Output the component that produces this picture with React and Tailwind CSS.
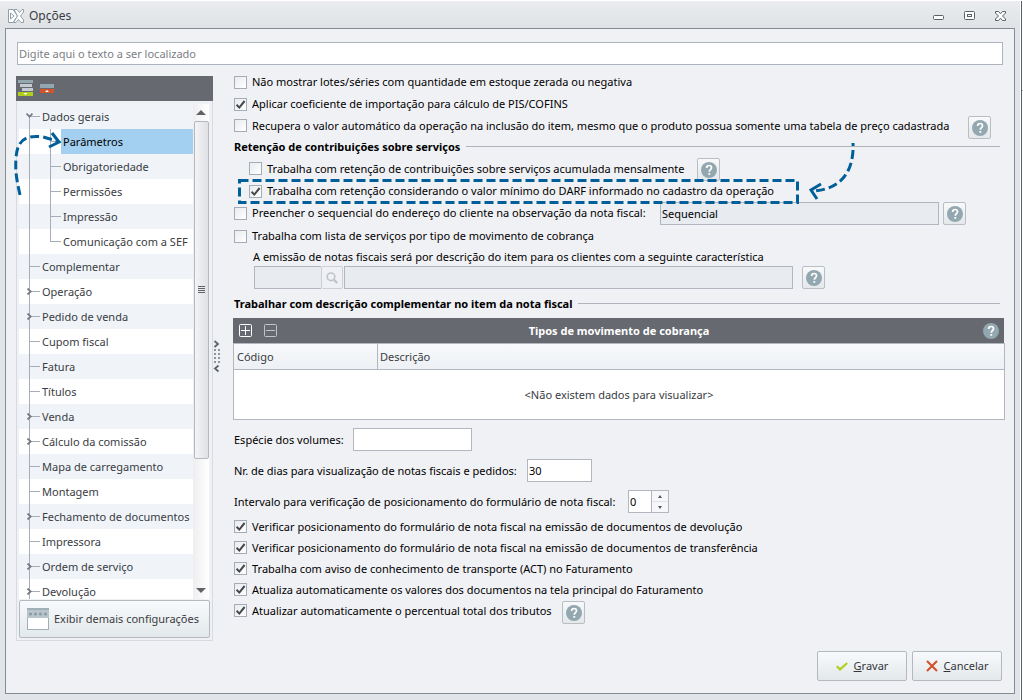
import React from 'react';

const TREE = [
  { name: 'Dados gerais', open: true },
  { name: 'Parâmetros', child: true, active: true },
  { name: 'Obrigatoriedade', child: true },
  { name: 'Permissões', child: true },
  { name: 'Impressão', child: true },
  { name: 'Comunicação com a SEF', child: true, last: true },
  { name: 'Complementar' },
  { name: 'Operação', more: true },
  { name: 'Pedido de venda', more: true },
  { name: 'Cupom fiscal' },
  { name: 'Fatura' },
  { name: 'Títulos' },
  { name: 'Venda', more: true },
  { name: 'Cálculo da comissão', more: true },
  { name: 'Mapa de carregamento' },
  { name: 'Montagem' },
  { name: 'Fechamento de documentos', more: true },
  { name: 'Impressora' },
  { name: 'Ordem de serviço', more: true },
  { name: 'Devolução', more: true },
];

const FINAL_CHECKS = [
  'Verificar posicionamento do formulário de nota fiscal na emissão de documentos de devolução',
  'Verificar posicionamento do formulário de nota fiscal na emissão de documentos de transferência',
  'Trabalha com aviso de conhecimento de transporte (ACT) no Faturamento',
  'Atualiza automaticamente os valores dos documentos na tela principal do Faturamento',
];

const Check = ({ label, checked, className = 'h-[22px]' }) => (
  <label className={`flex items-center gap-[5px] ${className}`}>
    <span className="grid size-[13px] shrink-0">
      <input
        type="checkbox"
        defaultChecked={checked}
        className="peer col-start-1 row-start-1 size-[13px] appearance-none border border-[#a4acb8] bg-linear-to-br from-[#e9ebee] to-white"
      />
      <svg
        viewBox="0 0 13 13"
        className="pointer-events-none invisible col-start-1 row-start-1 size-[13px] peer-checked:visible"
      >
        <path d="M2.6 6.8 5.3 9.6 10.6 3" fill="none" stroke="#45474c" strokeWidth="2" />
      </svg>
    </span>
    <span>{label}</span>
  </label>
);

const HelpMark = () => (
  <svg viewBox="0 0 16 16" className="size-4">
    <circle cx="8" cy="8" r="8" fill="#93a7b0" />
    <path d="M5.6 6.1C5.6 4.4 6.6 3.5 8.1 3.5s2.4.9 2.4 2.2c0 1.8-2.2 1.9-2.2 4" fill="none" stroke="#fff" strokeWidth="1.7" />
    <rect x="7.4" y="11" width="1.8" height="1.8" fill="#fff" />
  </svg>
);

const HelpButton = ({ className = '' }) => (
  <button
    type="button"
    aria-label="Ajuda"
    className={`mt-px flex size-[23px] shrink-0 items-center justify-center rounded-xs border border-[#b9bec5] bg-linear-to-b from-[#f8f9fb] to-[#e4e8eb] ${className}`}
  >
    <HelpMark />
  </button>
);

const Heading = ({ children, className = '' }) => (
  <div className={`flex items-center gap-[6px] ${className}`}>
    <h2 className="font-bold">{children}</h2>
    <span className="mr-[5px] h-px flex-1 bg-[#b0b5bd]" />
  </div>
);

const TreeRow = ({ item }) => (
  <li className="h-[25px] odd:bg-[#f0f4f9] even:bg-white">
    <button type="button" className="flex h-full w-full items-center overflow-hidden pl-[10px] text-left">
      <span
        className={`relative flex border-l border-[#a6acb8] ${
          item.open ? 'h-[13px] items-start self-end' : 'h-full items-center'
        } ${item.child ? 'w-[21px]' : 'w-[11px]'}`}
      >
        {!item.child && <span className="h-px w-[10px] bg-[#a6acb8]" />}
        {(item.more || item.open) && (
          <svg
            viewBox="0 0 7 7"
            className={`absolute -left-1 size-[7px] ${item.open ? '-top-1 rotate-90' : ''}`}
          >
            <path d="M1.5.5 4.7 3.5 1.5 6.5" fill="none" stroke="#777b85" strokeWidth="1.8" />
          </svg>
        )}
      </span>
      {item.child && (
        <span className="h-full w-[11px] shrink-0">
          <span className="block h-[13px] border-b border-l border-[#a6acb8]" />
          {!item.last && <span className="block h-3 border-l border-[#a6acb8]" />}
        </span>
      )}
      <span
        className={`flex h-full min-w-0 flex-1 items-center pl-[2px] whitespace-nowrap ${
          item.active ? 'bg-[#a3d0f0] text-black' : ''
        }`}
      >
        {item.name}
      </span>
    </button>
  </li>
);

const Sidebar = () => (
  <aside className="mt-[5px] flex w-[197px] shrink-0 flex-col text-[#3a3c42]">
    <div className="flex h-[25px] items-start gap-[7px] bg-[#666970] pt-1 pl-[2px]">
      <button type="button" aria-label="Expandir tudo">
        <svg viewBox="0 0 15 16" className="h-4 w-[15px]">
          <rect width="15" height="3" fill="#93a7b0" />
          <rect x="2" y="4" width="12" height="3" fill="#c5ccd1" />
          <rect x="4" y="8" width="11" height="3" fill="#c5ccd1" />
          <rect y="12" width="15" height="4" fill="#b0cf1c" />
          <path d="M5.5 13h4l-2 2z" fill="#fff" />
        </svg>
      </button>
      <button type="button" aria-label="Recolher tudo" className="mt-1">
        <svg viewBox="0 0 14 9" className="h-[9px] w-[14px]">
          <rect width="14" height="4" fill="#93a7b0" />
          <rect y="5" width="14" height="4" fill="#d2542b" />
          <path d="M5 8h4L7 6z" fill="#fff" />
        </svg>
      </button>
    </div>
    <div className="flex flex-1 flex-col border border-t-0 border-[#d6dbe2] px-[2px] pt-[3px] pb-[2px]">
      <div className="flex min-h-[200px] flex-1 basis-0 overflow-hidden pr-px">
        <ul className="min-w-0 flex-1">
          {TREE.map((item) => (
            <TreeRow key={item.name} item={item} />
          ))}
        </ul>
        <div className="flex w-4 flex-col items-center bg-linear-to-r from-[#eeeef0] to-white">
          <svg viewBox="0 0 10 17" className="h-[17px] w-[10px] shrink-0">
            <path d="M0 11h10L5 6z" fill="#606267" />
          </svg>
          <div className="flex w-[15px] flex-[338] flex-col items-center justify-center gap-px rounded-xs border border-[#b4b8be] bg-linear-to-r from-[#f4f4f6] to-[#dfe1e5]">
            <span className="h-px w-[7px] bg-[#606267]" />
            <span className="h-px w-[7px] bg-[#606267]" />
            <span className="h-px w-[7px] bg-[#606267]" />
            <span className="h-px w-[7px] bg-[#606267]" />
          </div>
          <div className="flex-[124]" />
          <svg viewBox="0 0 10 17" className="h-[17px] w-[10px] shrink-0">
            <path d="M0 6h10L5 11z" fill="#606267" />
          </svg>
        </div>
      </div>
      <button
        type="button"
        className="mt-px flex h-[38px] items-center gap-[5px] rounded-xs border border-[#b4b9c0] bg-linear-to-b from-[#f8fafc] to-[#e3e8eb] pl-[7px] whitespace-nowrap"
      >
        <svg viewBox="0 0 22 22" className="size-[22px]">
          <rect x=".5" y=".5" width="21" height="21" fill="#fff" stroke="#9fb0b8" />
          <rect width="22" height="10" fill="#b9c5cb" />
          <rect width="22" height="2" fill="#9fb0b8" />
          {[4, 9, 14, 19].map((x) => (
            <circle key={x} cx={x - 0.5} cy="6" r="1.6" fill="#8b9da6" />
          ))}
        </svg>
        Exibir demais configurações
      </button>
    </div>
  </aside>
);

const Splitter = () => (
  <div className="flex w-2 shrink-0 items-center justify-center">
    <svg viewBox="0 0 8 34" className="h-[34px] w-2">
      <path d="M1.5 2 5 5l-3.5 3M5.5 26.500 2 29.500l3.500 3" fill="none" stroke="#5f636b" strokeWidth="1.8" />
      {[10, 14, 18, 22].map((y) => (
        <g key={y} fill="#8f95a0">
          <rect x="1" y={y} width="2" height="2" />
          <rect x="5" y={y} width="2" height="2" />
        </g>
      ))}
    </svg>
  </div>
);

const ChargeTable = () => (
  <section className="mt-1">
    <div className="mr-px flex h-[25px] items-center bg-[#666970] pr-[5px] pl-[6px] text-white">
      <div className="flex flex-1 gap-3">
        <button type="button" aria-label="Adicionar">
          <svg viewBox="0 0 13 13" className="size-[13px]" fill="none" stroke="#fff">
            <rect x=".5" y=".5" width="12" height="12" rx="1" />
            <path d="M2 6.5h9M6.5 2v9" />
          </svg>
        </button>
        <button type="button" aria-label="Remover">
          <svg viewBox="0 0 13 13" className="size-[13px]" fill="none" stroke="#c2c4c8">
            <rect x=".5" y=".5" width="12" height="12" rx="1" />
            <path d="M2 6.5h9" />
          </svg>
        </button>
      </div>
      <h3 className="font-bold">Tipos de movimento de cobrança</h3>
      <div className="flex flex-1 justify-end">
        <button type="button" aria-label="Ajuda">
          <HelpMark />
        </button>
      </div>
    </div>
    <table className="w-full border-separate border-spacing-0 border border-[#b2b7bf] bg-white text-[#3a3c42]">
      <thead>
        <tr className="h-[26px] bg-linear-to-b from-[#f7f9fb] to-[#edf0f4] text-left">
          <th className="w-[144px] border-r border-b border-[#b2b7bf] pl-[3px] font-normal">Código</th>
          <th className="border-b border-[#b2b7bf] pl-[2px] font-normal">Descrição</th>
        </tr>
      </thead>
      <tbody>
        <tr className="h-[49px]">
          <td colSpan={2} className="text-center">
            &lt;Não existem dados para visualizar&gt;
          </td>
        </tr>
      </tbody>
    </table>
  </section>
);

const Settings = () => (
  <main className="min-w-0 flex-1 pl-3 text-black">
    <div className="pl-px">
      <Check label="Não mostrar lotes/séries com quantidade em estoque zerada ou negativa" />
      <Check label="Aplicar coeficiente de importação para cálculo de PIS/COFINS" checked />
      <div className="flex h-[21px] items-start">
        <Check
          className="h-[21px] w-[734px]"
          label="Recupera o valor automático da operação na inclusão do item, mesmo que o produto possua somente uma tabela de preço cadastrada"
        />
        <HelpButton />
      </div>

      <Heading className="h-[21px]">Retenção de contribuições sobre serviços</Heading>
      <div className="flex h-[22px] items-start pl-[15px]">
        <Check className="h-[23px] w-[448px]" label="Trabalha com retenção de contribuições sobre serviços acumulada mensalmente" />
        <HelpButton />
      </div>
      <div className="relative h-[22px] pl-[15px]">
        <Check
          checked
          className="h-6 w-[540px]"
          label="Trabalha com retenção considerando o valor mínimo do DARF informado no cadastro da operação"
        />
        <svg className="pointer-events-none absolute top-0 left-1 h-[25px] w-[561px]" fill="none">
          <rect x="1.5" y="1.5" width="558" height="22" stroke="#005f98" strokeWidth="3" strokeDasharray="9 4" />
        </svg>
        {/* callout arrow pointing at the highlighted option */}
        <svg
          viewBox="0 0 50 60"
          className="pointer-events-none absolute -top-9 left-[573px] h-[60px] w-[50px]"
          fill="none"
          stroke="#005f98"
          strokeWidth="3"
        >
          <path d="M46 0C47 21 40 46 6 48" strokeDasharray="9 4" strokeDashoffset="6" />
          <path d="M14 41 4 47 10 56" />
        </svg>
      </div>

      <div className="flex h-[23px] items-start">
        <Check className="h-6 w-[426px]" label="Preencher o sequencial do endereço do cliente na observação da nota fiscal:" />
        <input
          type="text"
          aria-label="Sequencial do endereço"
          defaultValue="Sequencial"
          className="mt-px h-[23px] w-[279px] border border-[#b2b7bf] bg-[#e8ebf0] px-px"
        />
        <HelpButton className="ml-1" />
      </div>
      <Check className="h-6" label="Trabalha com lista de serviços por tipo de movimento de cobrança" />
      <p className="h-[17px] pl-[19px] leading-[17px]">
        A emissão de notas fiscais será por descrição do item para os clientes com a seguinte característica
      </p>
      <div className="flex items-start pl-5">
        <input type="text" aria-label="Código da característica" disabled className="mt-px h-[23px] w-[67px] border border-r-0 border-[#b2b7bf] bg-[#e8ebf0]" />
        <button
          type="button"
          aria-label="Pesquisar"
          disabled
          className="mt-px mr-px flex h-[23px] w-[22px] items-center justify-center rounded-xs border border-[#ccd0d6] bg-[#eff1f4]"
        >
          <svg viewBox="0 0 12 12" className="size-3" fill="none" stroke="#bfc4ca">
            <circle cx="5" cy="4.8" r="3.8" strokeWidth="1.6" />
            <path d="M7.8 7.6 11.2 11" strokeWidth="2.2" />
          </svg>
        </button>
        <input type="text" aria-label="Característica" disabled className="mt-px h-[23px] w-[449px] border border-[#b2b7bf] bg-[#e8ebf0]" />
        <HelpButton className="ml-[9px]" />
      </div>

      <Heading className="mt-1 h-[21px]">Trabalhar com descrição complementar no item da nota fiscal</Heading>
    </div>

    <ChargeTable />

    <div className="pt-2 pl-px">
      <div className="flex h-[23px] items-center">
        <label htmlFor="especie" className="w-[119px]">Espécie dos volumes:</label>
        <input id="especie" type="text" className="h-[23px] w-[119px] border border-[#b2b7bf] bg-white px-px" />
      </div>
      <div className="mt-2 flex h-[23px] items-center">
        <label htmlFor="dias" className="w-[293px]">Nr. de dias para visualização de notas fiscais e pedidos:</label>
        <input id="dias" type="text" defaultValue="30" className="h-[23px] w-[65px] border border-[#b2b7bf] bg-white px-px" />
      </div>
      <div className="mt-2 flex h-[23px] items-center">
        <label htmlFor="intervalo" className="w-[394px]">
          Intervalo para verificação de posicionamento do formulário de nota fiscal:
        </label>
        <input id="intervalo" type="text" defaultValue="0" className="h-[23px] w-6 border border-[#b2b7bf] bg-white px-px" />
        <div className="flex h-[23px] w-[17px] flex-col border border-l-0 border-[#b2b7bf] bg-[#f6f7f9]">
          <button type="button" aria-label="Aumentar" className="flex flex-1 items-center justify-center border-b border-[#dfe2e6]">
            <svg viewBox="0 0 4 3" className="h-[3px] w-1"><path d="M0 3h4L2 0z" fill="#55585e" /></svg>
          </button>
          <button type="button" aria-label="Diminuir" className="flex flex-1 items-center justify-center">
            <svg viewBox="0 0 4 3" className="h-[3px] w-1"><path d="M0 0h4L2 3z" fill="#55585e" /></svg>
          </button>
        </div>
      </div>
      <div className="mt-[3px]">
        {FINAL_CHECKS.map((label) => (
          <Check key={label} label={label} checked className="h-[21px]" />
        ))}
        <div className="flex h-[21px] items-start">
          <Check checked className="h-[21px] w-[328px]" label="Atualizar automaticamente o percentual total dos tributos" />
          <HelpButton />
        </div>
      </div>
    </div>
  </main>
);

const TitleBar = () => (
  <header className="-mx-[5px] flex h-[27px] shrink-0 items-center bg-linear-to-b from-[#eaecef] to-[#dfe3e6] pt-[2px] pr-[14px] pl-2">
    <svg viewBox="0 0 16 14" className="h-[14px] w-4" fill="#fff" stroke="#8fa0aa">
      <path d="M.5.5h4.500L9.500 7 5 13.500H.5z" />
      <path d="M2.500 4v6l3.500-3z" />
      <path d="M6 .5h3l2.500 3 2.500-3h1.500V3L12.500 7l3 4v2.500H13L10.500 10.500 8 13.500H5.500L9.500 7z" />
    </svg>
    <h1 className="ml-[5px] flex-1 text-xs text-[#3a3c42]">Opções</h1>
    <div className="flex items-center gap-5">
      <button type="button" aria-label="Minimizar" className="pt-1">
        <svg viewBox="0 0 11 5" className="h-[5px] w-[11px]" fill="#fff" stroke="#5b5f66">
          <rect x=".5" y=".5" width="10" height="4" rx="1" />
        </svg>
      </button>
      <button type="button" aria-label="Maximizar">
        <svg viewBox="0 0 11 9" className="h-[9px] w-[11px]" fill="#fff" stroke="#5b5f66">
          <rect x=".5" y=".5" width="10" height="8" rx="1" />
          <rect x="3.5" y="3.5" width="4" height="2" />
        </svg>
      </button>
      <button type="button" aria-label="Fechar">
        <svg viewBox="0 0 11 10" className="h-[10px] w-[11px]" fill="#fff" stroke="#5b5f66">
          <path d="M.5.5h3l2 2.300 2-2.300h3v1.500L7.500 5l3 3v1.500h-3l-2-2.300-2 2.300h-3V8l3-3-3-3z" />
        </svg>
      </button>
    </div>
  </header>
);

const App = () => (
  <div className="flex min-h-screen bg-white pt-px font-['Noto_Sans',sans-serif] text-[11px] leading-4">
    <div className="relative flex flex-1 flex-col bg-[#e1e4e8] px-[5px] pb-[6px]">
      <TitleBar />
      <div className="flex flex-1 flex-col border border-[#878c93] bg-[#f0f1f5] pt-[13px] pr-[9px] pb-3 pl-[10px]">
        <input
          type="search"
          aria-label="Localizar"
          placeholder="Digite aqui o texto a ser localizado"
          className="mr-[2px] ml-px h-[23px] shrink-0 border border-[#aeb4bd] bg-white px-px placeholder:text-[#7b7e85]"
        />
        <div className="mt-[6px] flex flex-1">
          <Sidebar />
          <Splitter />
          <Settings />
        </div>
        <footer className="mt-[10px] mr-[3px] flex justify-end gap-[5px] text-[#33353a]">
          <button
            type="submit"
            className="flex h-[30px] w-[90px] items-center justify-center gap-[6px] rounded-xs border border-[#b4b9c0] bg-linear-to-b from-[#f8fafc] to-[#e3e8eb]"
          >
            <svg viewBox="0 0 12 9" className="h-[9px] w-3" fill="none" stroke="#b0d01f" strokeWidth="2.2">
              <path d="M.8 4.200 4 7.400 11.200 1" />
            </svg>
            <span><u>G</u>ravar</span>
          </button>
          <button
            type="button"
            className="flex h-[30px] w-[90px] items-center justify-center gap-[6px] rounded-xs border border-[#b4b9c0] bg-linear-to-b from-[#f8fafc] to-[#e3e8eb]"
          >
            <svg viewBox="0 0 12 12" className="size-3" fill="none" stroke="#d2502a" strokeWidth="2">
              <path d="M1 1 11 11M11 1 1 11" />
            </svg>
            <span><u>C</u>ancelar</span>
          </button>
        </footer>
      </div>
      {/* callout arrow over the tree, pointing at the active entry */}
      <svg
        viewBox="0 0 50 66"
        className="pointer-events-none absolute top-32 left-[13px] h-[66px] w-[50px]"
        fill="none"
        stroke="#005f98"
        strokeWidth="3"
      >
        <path d="M7 66C4 52 2 44 3 29 4 14 10 5 30 8L44 12" strokeDasharray="9 4" />
        <path d="M39 4 46 13 36 18" />
      </svg>
    </div>
    <div className="ml-px w-[2px] border-l border-[#565d68] bg-white pt-[89px]">
      <div className="h-px bg-[#a6acb8]" />
    </div>
  </div>
);

export default App;
